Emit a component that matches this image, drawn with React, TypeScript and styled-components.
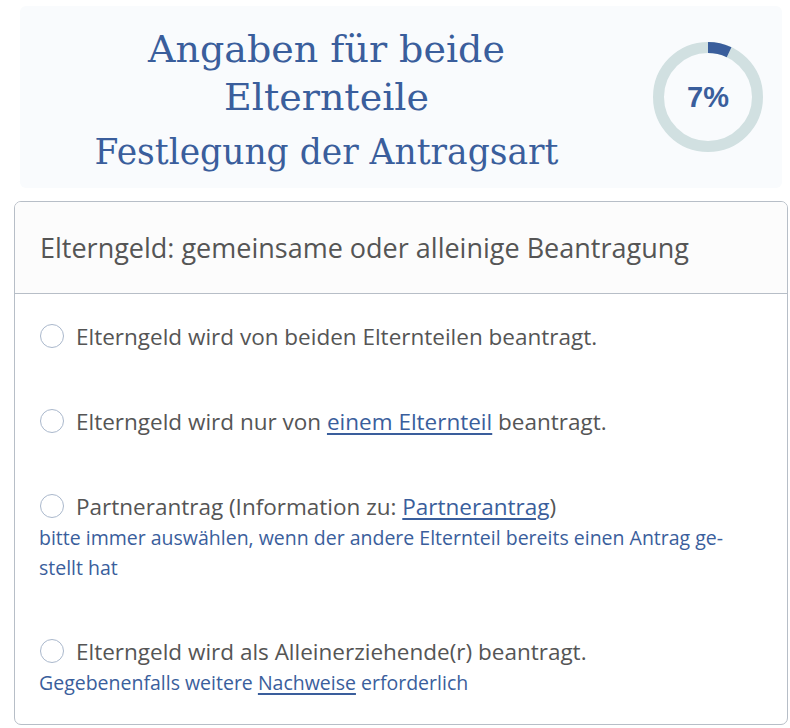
import * as React from "react";
import styled, { createGlobalStyle } from "styled-components";

const Global = createGlobalStyle`
  html, body { margin: 0; padding: 0; background: #ffffff; }
  * { box-sizing: border-box; }
`;

const BLUE = "#3a5e9c";

const Page = styled.div`
  padding: 6px 2px 4px 14px;
  font-family: "Open Sans", "Noto Sans", sans-serif;
`;

const Head = styled.div`
  margin: 0 6px 13px 6px;
  height: 182px;
  background: #f9fbfd;
  border-radius: 6px;
  display: flex;
  align-items: center;
`;

const Titles = styled.div`
  flex: 1;
  display: flex;
  flex-direction: column;
  align-items: center;
  text-align: center;
  color: ${BLUE};
  font-family: "DejaVu Serif", "Liberation Serif", serif;
  padding: 4px 20px 0 0;
`;

const H1 = styled.h1`
  margin: 0;
  font-size: 38px;
  font-weight: 400;
  line-height: 48px;
  width: 430px;
`;

const H2 = styled.h2`
  margin: 10px 0 0 0;
  font-size: 34.5px;
  font-weight: 400;
  line-height: 42px;
`;

const Ring = styled.div`
  width: 110px;
  height: 110px;
  margin-right: 19px;
  position: relative;
  display: grid;
  place-items: center;
`;

const Percent = styled.span`
  position: absolute;
  font-family: "Liberation Sans", Arial, sans-serif;
  font-weight: 700;
  font-size: 29px;
  color: ${BLUE};
`;

const Card = styled.section`
  border: 1px solid #b7bec7;
  border-radius: 7px;
  overflow: hidden;
`;

const CardHead = styled.div`
  height: 92px;
  padding: 0 25px;
  display: flex;
  align-items: center;
  background: #fcfcfc;
  border-bottom: 1px solid #b7bec7;
  font-size: 27px;
  color: #555555;
`;

const CardBody = styled.div`
  padding: 25px 24px 26px 24px;
  display: flex;
  flex-direction: column;
  gap: 51px;
`;

const Option = styled.div`
  display: flex;
  flex-direction: column;
`;

const Label = styled.label`
  display: flex;
  align-items: center;
  height: 34px;
  font-size: 22.5px;
  color: #555555;
  white-space: nowrap;
`;

const Radio = styled.span`
  width: 24px;
  height: 24px;
  border-radius: 50%;
  border: 1px solid #aab8cc;
  background: #fff;
  margin: 0 12px 0 1px;
  flex: none;
`;

const Link = styled.a`
  color: ${BLUE};
  text-decoration: underline;
  text-underline-offset: 3px;
  text-decoration-thickness: 2px;
`;

const Hint = styled.div`
  font-size: 19.5px;
  line-height: 30px;
  color: ${BLUE};
  max-width: 712px;
`;

const ProgressRing = ({ value }: { value: number }) => {
  const r = 49.5;
  const c = 2 * Math.PI * r;
  return (
    <Ring>
      <svg width="110" height="110" viewBox="0 0 110 110">
        <circle cx="55" cy="55" r={r} fill="none" stroke="#d1e0e1" strokeWidth="11" />
        <circle
          cx="55"
          cy="55"
          r={r}
          fill="none"
          stroke={BLUE}
          strokeWidth="11"
          strokeDasharray={`${(c * value) / 100} ${c}`}
          transform="rotate(-90 55 55)"
        />
      </svg>
      <Percent>{value}%</Percent>
    </Ring>
  );
};

export default function App() {
  return (
    <Page lang="de">
      <Global />
      <Head>
        <Titles>
          <H1>Angaben für beide Elternteile</H1>
          <H2>Festlegung der Antragsart</H2>
        </Titles>
        <ProgressRing value={7} />
      </Head>
      <Card>
        <CardHead>Elterngeld: gemeinsame oder alleinige Beantragung</CardHead>
        <CardBody>
          <Option>
            <Label>
              <Radio />
              Elterngeld wird von beiden Elternteilen beantragt.
            </Label>
          </Option>
          <Option>
            <Label>
              <Radio />
              Elterngeld wird nur von&nbsp;<Link href="#">einem Elternteil</Link>&nbsp;beantragt.
            </Label>
          </Option>
          <Option>
            <Label>
              <Radio />
              Partnerantrag (Information zu:&nbsp;<Link href="#">Partnerantrag</Link>)
            </Label>
            <Hint>
              bitte immer auswählen, wenn der andere Elternteil bereits einen Antrag ge{"\u00AD"}stellt hat
            </Hint>
          </Option>
          <Option>
            <Label>
              <Radio />
              Elterngeld wird als Alleinerziehende(r) beantragt.
            </Label>
            <Hint>
              Gegebenenfalls weitere <Link href="#">Nachweise</Link> erforderlich
            </Hint>
          </Option>
        </CardBody>
      </Card>
    </Page>
  );
}
